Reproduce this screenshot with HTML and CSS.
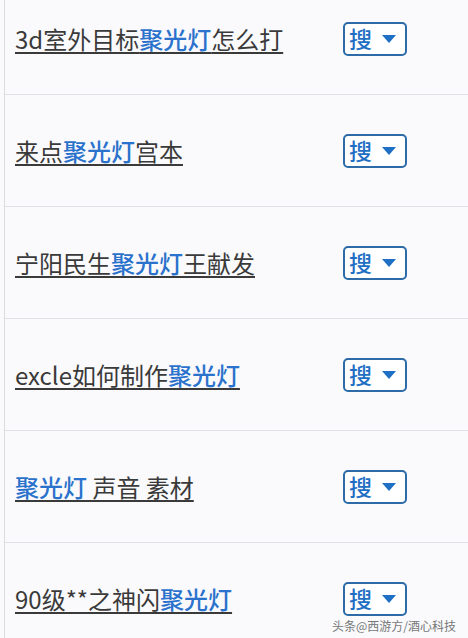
FILE: index.html
```html
<!DOCTYPE html>
<html lang="zh-CN">
<head>
<meta charset="UTF-8">
<meta name="viewport" content="width=device-width, initial-scale=1.0">
<title>聚光灯 相关搜索</title>
<link rel="stylesheet" href="styles.css">
</head>
<body>
<div id="list">
    <div class="row">
        <a class="term" href="#">3d室外目标<em>聚光灯</em>怎么打</a>
        <span class="search-btn">搜<i class="caret"></i></span>
    </div>
    <div class="row">
        <a class="term" href="#">来点<em>聚光灯</em>宫本</a>
        <span class="search-btn">搜<i class="caret"></i></span>
    </div>
    <div class="row">
        <a class="term" href="#">宁阳民生<em>聚光灯</em>王献发</a>
        <span class="search-btn">搜<i class="caret"></i></span>
    </div>
    <div class="row">
        <a class="term" href="#">excle如何制作<em>聚光灯</em></a>
        <span class="search-btn">搜<i class="caret"></i></span>
    </div>
    <div class="row">
        <a class="term" href="#"><em>聚光灯</em> 声音 素材</a>
        <span class="search-btn">搜<i class="caret"></i></span>
    </div>
    <div class="row">
        <a class="term" href="#">90级**之神闪<em>聚光灯</em></a>
        <span class="search-btn">搜<i class="caret"></i></span>
    </div>
</div>
<div id="watermark">头条@西游方/酒心科技</div>
</body>
</html>
```

FILE: styles.css
```css
body {
    font-family: "Noto Sans CJK SC", "Noto Sans", sans-serif;
    background-color: #fafafc;
    margin: 0;
    padding: 0 0 0 4px;
    height: 638px;
    overflow: hidden;
    position: relative;
}
#list {
    margin-top: -17px;
    border-left: 1px solid #dcdcdf;
}
.row {
    display: flex;
    align-items: center;
    height: 111px;
    border-bottom: 1px solid #e2e2e6;
    padding-left: 10px;
}
.term {
    width: 328px;
    font-size: 24px;
    line-height: 30px;
    color: #3a3a3a;
    text-decoration: underline;
    text-decoration-thickness: 1.5px;
    text-underline-offset: 3px;
    white-space: nowrap;
}
.term em {
    font-style: normal;
    font-weight: 500;
    color: #2b72cc;
}
.search-btn {
    display: flex;
    align-items: center;
    box-sizing: border-box;
    width: 64px;
    height: 34px;
    padding-left: 4px;
    border: 2px solid #2d6aa8;
    border-radius: 5px;
    background-color: #fff;
    color: #1f6fc4;
    font-size: 23px;
    font-weight: 500;
    line-height: 1;
}
.caret {
    width: 0;
    height: 0;
    margin-left: 10px;
    border-left: 7px solid transparent;
    border-right: 7px solid transparent;
    border-top: 8px solid #1f6fc4;
}
#watermark {
    position: absolute;
    right: 12px;
    bottom: 4px;
    font-size: 12px;
    color: #777;
}
```
